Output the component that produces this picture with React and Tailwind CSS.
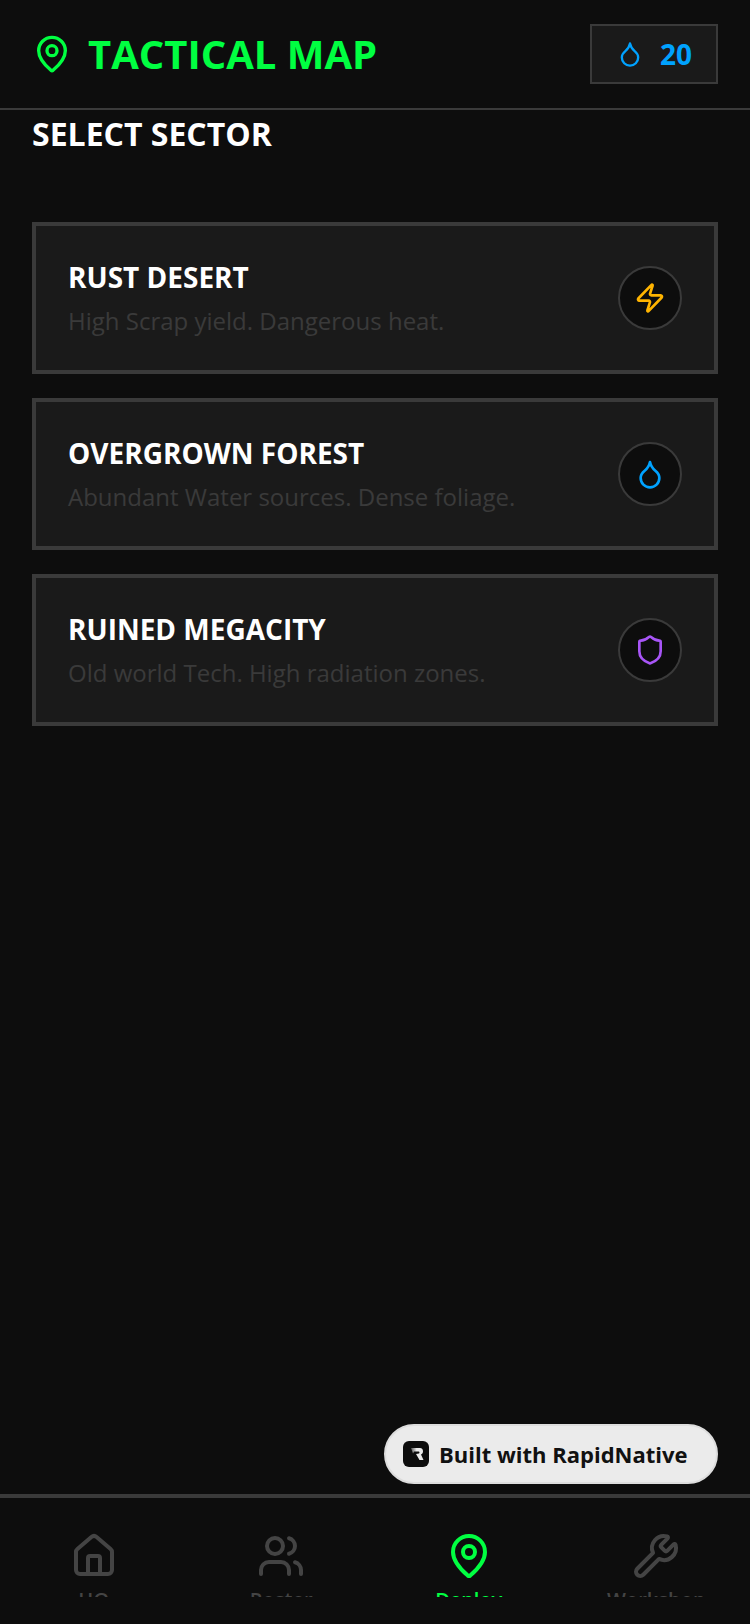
import React from 'react';
import { MapPin, Droplet, Zap, Shield, Home, Users, Wrench } from 'lucide-react';

const sectors = [
  { name: 'RUST DESERT', desc: 'High Scrap yield. Dangerous heat.', Icon: Zap, color: 'text-[#ffb400]' },
  { name: 'OVERGROWN FOREST', desc: 'Abundant Water sources. Dense foliage.', Icon: Droplet, color: 'text-[#00a2ff]' },
  { name: 'RUINED MEGACITY', desc: 'Old world Tech. High radiation zones.', Icon: Shield, color: 'text-[#a855f7]' },
];

const tabs = [
  { label: 'HQ', Icon: Home },
  { label: 'Roster', Icon: Users },
  { label: 'Deploy', Icon: MapPin, active: true },
  { label: 'Workshop', Icon: Wrench },
];

export default function App() {
  return (
    <div className="relative flex flex-col h-[1624px] overflow-hidden bg-[#0d0d0d] font-['Open_Sans',sans-serif]">
      {/* Header */}
      <div className="flex items-center justify-between h-[110px] px-8 border-b-2 border-[#3a3a3a]">
        <div className="flex items-center gap-4">
          <MapPin size={40} strokeWidth={2} className="text-[#00ff41]" />
          <h1 className="text-[40px] font-bold text-[#00ff41]">TACTICAL MAP</h1>
        </div>
        <div className="flex items-center gap-4 h-[60px] px-6 bg-[#1a1a1a] border-2 border-[#3a3a3a]">
          <Droplet size={28} strokeWidth={2} className="text-[#00a2ff]" />
          <span className="text-[28px] font-bold text-[#00a2ff]">20</span>
        </div>
      </div>

      {/* Sector list */}
      <div className="flex-1 px-8">
        <h2 className="text-[32px] font-bold leading-[48px] text-white mb-[64px]">SELECT SECTOR</h2>
        <div className="flex flex-col gap-6">
          {sectors.map(({ name, desc, Icon, color }) => (
            <div key={name} className="flex items-center justify-between h-[152px] px-8 bg-[#1a1a1a] border-4 border-[#3a3a3a]">
              <div className="mb-[2px]">
                <h3 className="text-[28px] font-bold leading-[38px] text-white mb-2">{name}</h3>
                <p className="text-[24px] leading-[33px] text-[#3a3a3a]">{desc}</p>
              </div>
              <div className="flex items-center justify-center w-16 h-16 rounded-full bg-[#0d0d0d] border-2 border-[#3a3a3a]">
                <Icon size={32} strokeWidth={2} className={color} />
              </div>
            </div>
          ))}
        </div>
      </div>

      {/* Badge */}
      <div className="absolute right-8 top-[1424px] flex items-center gap-[10px] h-[60px] w-[334px] pl-[17px] rounded-full bg-[#ebebeb] border-2 border-[#dddddd]">
        <svg width="26" height="26" viewBox="0 0 26 26">
          <defs>
            <linearGradient id="rn" x1="0" y1="0" x2="1" y2="0">
              <stop offset="0" stopColor="#555555" />
              <stop offset="0.45" stopColor="#ebebeb" />
            </linearGradient>
          </defs>
          <rect width="26" height="26" rx="6" fill="#0d0d0d" />
          <path d="M8 7h9c2 0 3 1.500 3 3.500 0 1.500-1 2.500-2 3l2.500 5.500h-4l-3.500-6 3-.5c.7-.2.700-2-.3-2H11l-1 2z" fill="url(#rn)" />
        </svg>
        <span className="text-[22px] font-bold text-[#111111]">Built with RapidNative</span>
      </div>

      {/* Bottom tabs */}
      <div className="flex h-[130px] border-t-4 border-[#3a3a3a]">
        {tabs.map(({ label, Icon, active }) => (
          <div key={label} className="flex-1 flex flex-col items-center pt-[34px] h-[99px] overflow-hidden">
            <Icon size={48} strokeWidth={2} className={`shrink-0 ${active ? 'text-[#00ff41]' : 'text-[#444444]'}`} />
            <span className={`shrink-0 text-[20px] font-semibold mt-[5px] ${active ? 'text-[#00ff41]' : 'text-[#444444]'}`}>{label}</span>
          </div>
        ))}
      </div>
    </div>
  );
}
